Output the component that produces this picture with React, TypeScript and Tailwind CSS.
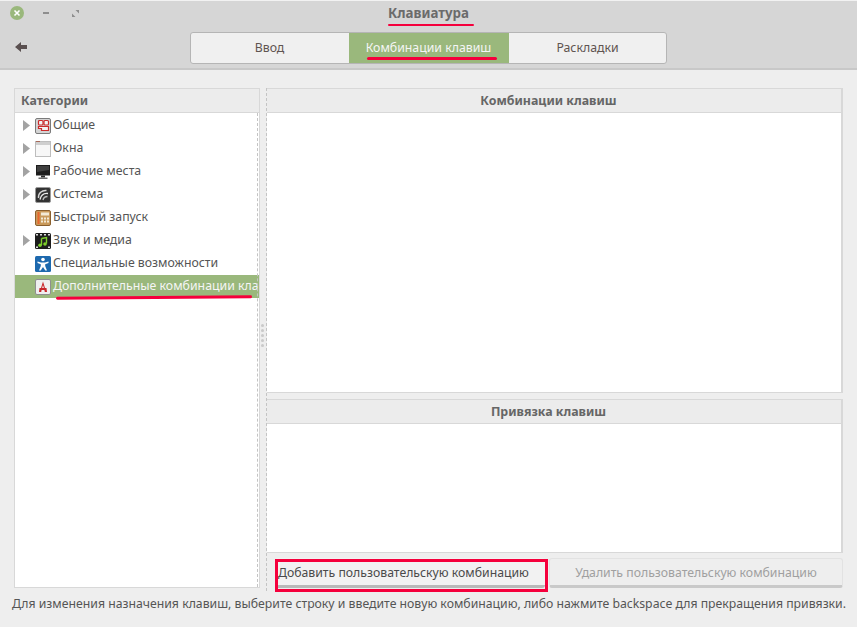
import React from "react";

const Arrow = () => (
  <svg width="7" height="11" viewBox="0 0 7 11" className="shrink-0"><path d="M0 0L7 5.5L0 11Z" fill="#a3a3a3" /></svg>
);

const IconObshchie = () => (
  <svg width="16" height="16" viewBox="0 0 16 16">
    <rect x="0.5" y="0.5" width="15" height="15" rx="1.5" fill="#d4d4d4" stroke="#7b7b7b" />
    <rect x="3.5" y="2.5" width="4.5" height="4.5" rx="1" fill="#f3f3f3" stroke="#cc2b2b" strokeWidth="1.2" />
    <rect x="9" y="2.5" width="4.5" height="4.5" rx="1" fill="#f3f3f3" stroke="#cc2b2b" strokeWidth="1.2" />
    <path d="M3.5 8.5H13.5V12.5H6.5V10.5H3.5Z" fill="#f3f3f3" stroke="#cc2b2b" strokeWidth="1.2" />
  </svg>
);
const IconWindow = () => (
  <svg width="16" height="16" viewBox="0 0 16 16">
    <rect x="0.5" y="0.5" width="15" height="15" fill="#f7f7f7" stroke="#bdbdbd" />
    <rect x="1" y="1" width="14" height="3" fill="#cfcfcf" />
    <rect x="1" y="0" width="4" height="1" fill="#a86a5a" />
  </svg>
);
const IconMonitor = () => (
  <svg width="16" height="16" viewBox="0 0 16 16">
    <path d="M1 1H15V11.5H1Z" fill="#1c1c1c" />
    <path d="M2 2H14V6L2 8Z" fill="#3f3f3f" />
    <rect x="6" y="11.5" width="4" height="2" fill="#2b2b2b" />
    <rect x="3.5" y="13.5" width="9" height="1.5" fill="#6b6b6b" />
  </svg>
);
const IconSystem = () => (
  <svg width="16" height="16" viewBox="0 0 16 16">
    <rect x="0.5" y="0.5" width="15" height="15" rx="1.5" fill="#333" stroke="#999" />
    <path d="M3.5 11C3 6 7 3 11.5 3.5" fill="none" stroke="#d6d6d6" strokeWidth="1.4" />
    <path d="M5 12.5C6 8 9 6 13 6.5" fill="none" stroke="#ededed" strokeWidth="1.4" />
    <path d="M8 13C8.5 10.5 10 9.5 12.5 9.5" fill="none" stroke="#bdbdbd" strokeWidth="1.3" />
  </svg>
);
const IconCalc = () => (
  <svg width="16" height="16" viewBox="0 0 16 16">
    <rect x="0.5" y="0.5" width="15" height="15" rx="1.5" fill="#c99a5b" stroke="#8a5f2d" />
    <rect x="2.5" y="2" width="2" height="12" fill="#e8662d" />
    <rect x="6" y="2.5" width="8" height="3" fill="#f3ead6" />
    <path d="M6 7.5h2v2H6zM9 7.5h2v2H9zM12 7.5h2v2h-2zM6 10.5h2v2H6zM9 10.5h2v2H9zM12 10.5h2v2h-2z" fill="#f3ead6" />
  </svg>
);
const IconMusic = () => (
  <svg width="16" height="16" viewBox="0 0 16 16">
    <rect x="0" y="0" width="16" height="16" rx="1.5" fill="#1d1d1d" />
    <path d="M1 1h2v1.5H1zM5 1h2v1.5H5zM9 1h2v1.5H9zM13 1h2v1.5h-2zM1 13.5h2V15H1zM13 13.5h2V15h-2z" fill="#ddd" />
    <path d="M6.5 5.5L11.5 4.5V10.5M6.5 5.5V12" stroke="#7fd02c" strokeWidth="1.4" fill="none" />
    <circle cx="5" cy="12.3" r="1.8" fill="#7fd02c" />
    <circle cx="10" cy="11" r="1.8" fill="#7fd02c" />
  </svg>
);
const IconAccess = () => (
  <svg width="16" height="16" viewBox="0 0 16 16">
    <rect x="0" y="0" width="16" height="16" rx="1.5" fill="#1d69ae" />
    <circle cx="8" cy="3.5" r="1.8" fill="#fff" />
    <path d="M2.5 5.5L6 6.5H10L13.5 5.5V7L10.2 8.2V10L12 14.5H10.3L8 11L5.7 14.5H4L5.8 10V8.2L2.5 7Z" fill="#fff" />
  </svg>
);
const IconCustom = () => (
  <svg width="16" height="16" viewBox="0 0 16 16">
    <rect x="0.5" y="0.5" width="15" height="15" rx="1.5" fill="#efefef" stroke="#8f8f8f" />
    <path d="M8 2.5L10 9H11.5L12 13H9.8L9.4 11H6.6L6.2 13H4L4.5 9H6ZM8 6L7.1 9H8.9Z" fill="#c8262b" />
  </svg>
);

const categories = [
  { label: "Общие", icon: <IconObshchie />, arrow: true },
  { label: "Окна", icon: <IconWindow />, arrow: true },
  { label: "Рабочие места", icon: <IconMonitor />, arrow: true },
  { label: "Система", icon: <IconSystem />, arrow: true },
  { label: "Быстрый запуск", icon: <IconCalc />, arrow: false },
  { label: "Звук и медиа", icon: <IconMusic />, arrow: true },
  { label: "Специальные возможности", icon: <IconAccess />, arrow: false },
  { label: "Дополнительные комбинации кла", icon: <IconCustom />, arrow: false, selected: true },
];

function ListHeader({ children, center }: { children: React.ReactNode; center?: boolean }) {
  return (
    <div className={`h-[24px] shrink-0 flex items-center bg-[#ececec] border-b border-[#d8d8d8] text-[12.4px] font-bold text-[#666] pt-[1px] ${center ? "justify-center pr-[11px]" : "pl-[6px]"}`}>
      {children}
    </div>
  );
}

export default function App() {
  return (
    <div className="relative w-[857px] h-[627px] overflow-hidden bg-[#eeeeee] text-[#555] font-['Noto_Sans',sans-serif] text-[12.25px]">
      <header className="h-[70px] bg-[#d6d6d6] border-t border-[#f2f2f2] border-b-2 border-b-[#c8c8c8] flex flex-col">
        <div className="h-[31px] shrink-0 relative flex items-center justify-center">
          <span className="text-[13.3px] font-bold text-[#6b6b6b] leading-none mt-[-5px]">Клавиатура</span>
          <div className="absolute left-[10px] top-[5px] flex items-center">
            <span className="w-[14px] h-[14px] rounded-full bg-[#9ab87c] flex items-center justify-center">
              <svg width="8" height="8" viewBox="0 0 8 8"><path d="M1.5 1.5L6.5 6.5M6.5 1.5L1.5 6.5" stroke="#fff" strokeWidth="1.6" /></svg>
            </span>
            <span className="ml-[19px] w-[6px] h-[2px] bg-[#8e8e8e]" />
            <svg className="ml-[23px]" width="7" height="7" viewBox="0 0 7 7"><path d="M3.5 0H7V3.5ZM3.5 7H0V3.5Z" fill="#8e8e8e" /></svg>
          </div>
        </div>
        <div className="relative flex justify-center">
          <svg className="absolute left-[15px] top-[10px]" width="12" height="10" viewBox="0 0 12 10"><path d="M0 5L6 0V3H12V7H6V10Z" fill="#5a5050" /></svg>
          <div className="flex h-[32px] w-[477px] ml-[-1px] rounded-[3px] border border-[#b5b5b5] bg-[#f0f0f0] text-[#5f5450] text-[12.3px] overflow-hidden">
            <div className="w-[158px] flex items-center justify-center">Ввод</div>
            <div className="w-[160px] flex items-center justify-center bg-[#9ab87c] text-[#f5f5f5]">Комбинации клавиш</div>
            <div className="flex-1 flex items-center justify-center pl-[1px]">Раскладки</div>
          </div>
        </div>
      </header>

      <main className="flex pl-[14px] pr-[14px] pt-[18px] h-[518px]">
        <section className="w-[246px] h-[500px] shrink-0 flex flex-col border border-[#d8d8d8] bg-white">
          <ListHeader>Категории</ListHeader>
          <div className="relative flex-1 overflow-hidden">
            <ul className="pt-[1px] flex flex-col">
              {categories.map((c) => (
                <li key={c.label} className={`h-[23px] flex items-center whitespace-nowrap overflow-hidden ${c.selected ? "bg-[#9ab87c] text-[#f5f5f5]" : "text-[#555]"}`}>
                  <span className="w-[20px] shrink-0 flex justify-start pl-[8px]">{c.arrow && <Arrow />}</span>
                  <span className="shrink-0 flex">{c.icon}</span>
                  <span className="ml-[2px] text-[12.3px]">{c.label}</span>
                </li>
              ))}
            </ul>
            <div className="absolute top-0 bottom-0 right-[1px] border-r border-dashed border-[#c4c4c4]" />
          </div>
        </section>

        <div className="w-[6px] shrink-0 relative">
          <div className="absolute left-[1px] top-[236px] flex flex-col gap-[2px]">
            {[0, 1, 2, 3, 4].map((i) => (
              <span key={i} className="w-[3px] h-[3px] rounded-full bg-[#c9c9c9]" />
            ))}
          </div>
        </div>

        <section className="flex-1 flex flex-col min-w-0 border-l border-dashed border-[#c4c4c4] h-[503px]">
          <div className="h-[305px] flex flex-col border border-l-0 border-[#d8d8d8] border-r-2 bg-white">
            <ListHeader center>Комбинации клавиш</ListHeader>
          </div>
          <div className="mt-[6px] h-[154px] flex flex-col border border-l-0 border-[#d8d8d8] border-r-2 bg-white">
            <ListHeader center>Привязка клавиш</ListHeader>
          </div>
          <div className="mt-[5px] flex gap-[4px] pl-[8px]">
            <div className="w-[270px] h-[30px] flex items-center rounded-[3px] bg-[#f2f2f2] border-b-[3px] border-b-[#b9b9b9] text-[#4a4a4a] pl-[3px] pt-[3px]">Добавить пользовательскую комбинацию</div>
            <div className="flex-1 h-[30px] flex items-center justify-center rounded-[3px] bg-[#eeeeee] border border-[#e2e2e2] border-b-[3px] border-b-[#c9c9c9] text-[#a0a0a0] pt-[2px]">Удалить пользовательскую комбинацию</div>
          </div>
        </section>
      </main>

      <footer className="pl-[12px] whitespace-nowrap text-[#555] leading-[18px] mt-[7px]">
        Для изменения назначения клавиш, выберите строку и введите новую комбинацию, либо нажмите backspace для прекращения привязки.
      </footer>

      {/* Red annotations drawn over the screenshot */}
      <div className="absolute left-[388px] top-[24px] w-[86px] h-[2px] rounded bg-[#f5003c]" />
      <div className="absolute left-[367px] top-[57px] w-[130px] h-[2.5px] rounded bg-[#f5003c]" />
      <div className="absolute left-[56px] top-[296px] w-[196px] h-[2.5px] rounded bg-[#f5003c] -rotate-[0.5deg]" />
      <div className="absolute left-[275px] top-[559px] w-[273px] h-[33px] border-[3px] border-[#f5003c]" />
    </div>
  );
}
